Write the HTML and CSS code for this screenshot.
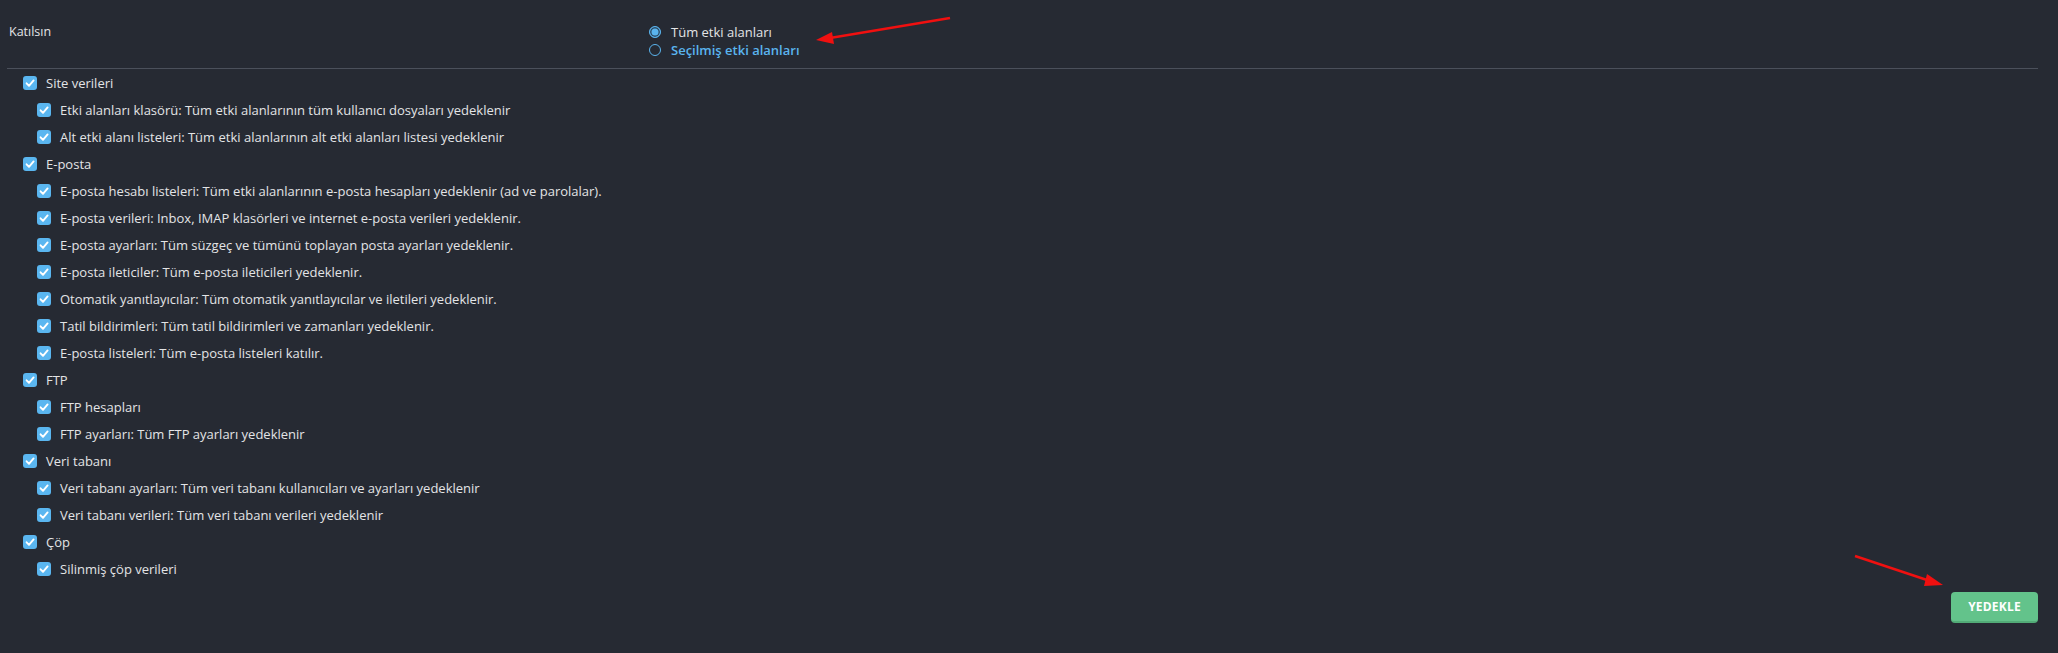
FILE: index.html
```html
<!DOCTYPE html>
<html lang="tr">
<head>
<meta charset="utf-8">
<title>Yedekle</title>
<link rel="stylesheet" href="styles.css">
</head>
<body>
<div class="page">
  <div class="field-row">
    <div class="field-label">Katılsın</div>
    <div class="radio-group">
      <label class="radio"><span class="radio-dot checked"></span><span class="radio-text">Tüm etki alanları</span></label>
      <label class="radio"><span class="radio-dot"></span><span class="radio-text link">Seçilmiş etki alanları</span></label>
    </div>
  </div>
  <ul class="tree">
    <li class="row lvl1"><span class="cb"><svg viewBox="0 0 14 14"><path d="M3.6 7.3 L6 9.8 L10.6 4.4"/></svg></span>Site verileri</li>
    <li class="row lvl2"><span class="cb"><svg viewBox="0 0 14 14"><path d="M3.6 7.3 L6 9.8 L10.6 4.4"/></svg></span>Etki alanları klasörü: Tüm etki alanlarının tüm kullanıcı dosyaları yedeklenir</li>
    <li class="row lvl2"><span class="cb"><svg viewBox="0 0 14 14"><path d="M3.6 7.3 L6 9.8 L10.6 4.4"/></svg></span>Alt etki alanı listeleri: Tüm etki alanlarının alt etki alanları listesi yedeklenir</li>
    <li class="row lvl1"><span class="cb"><svg viewBox="0 0 14 14"><path d="M3.6 7.3 L6 9.8 L10.6 4.4"/></svg></span>E-posta</li>
    <li class="row lvl2"><span class="cb"><svg viewBox="0 0 14 14"><path d="M3.6 7.3 L6 9.8 L10.6 4.4"/></svg></span>E-posta hesabı listeleri: Tüm etki alanlarının e-posta hesapları yedeklenir (ad ve parolalar).</li>
    <li class="row lvl2"><span class="cb"><svg viewBox="0 0 14 14"><path d="M3.6 7.3 L6 9.8 L10.6 4.4"/></svg></span>E-posta verileri: Inbox, IMAP klasörleri ve internet e-posta verileri yedeklenir.</li>
    <li class="row lvl2"><span class="cb"><svg viewBox="0 0 14 14"><path d="M3.6 7.3 L6 9.8 L10.6 4.4"/></svg></span>E-posta ayarları: Tüm süzgeç ve tümünü toplayan posta ayarları yedeklenir.</li>
    <li class="row lvl2"><span class="cb"><svg viewBox="0 0 14 14"><path d="M3.6 7.3 L6 9.8 L10.6 4.4"/></svg></span>E-posta ileticiler: Tüm e-posta ileticileri yedeklenir.</li>
    <li class="row lvl2"><span class="cb"><svg viewBox="0 0 14 14"><path d="M3.6 7.3 L6 9.8 L10.6 4.4"/></svg></span>Otomatik yanıtlayıcılar: Tüm otomatik yanıtlayıcılar ve iletileri yedeklenir.</li>
    <li class="row lvl2"><span class="cb"><svg viewBox="0 0 14 14"><path d="M3.6 7.3 L6 9.8 L10.6 4.4"/></svg></span>Tatil bildirimleri: Tüm tatil bildirimleri ve zamanları yedeklenir.</li>
    <li class="row lvl2"><span class="cb"><svg viewBox="0 0 14 14"><path d="M3.6 7.3 L6 9.8 L10.6 4.4"/></svg></span>E-posta listeleri: Tüm e-posta listeleri katılır.</li>
    <li class="row lvl1"><span class="cb"><svg viewBox="0 0 14 14"><path d="M3.6 7.3 L6 9.8 L10.6 4.4"/></svg></span>FTP</li>
    <li class="row lvl2"><span class="cb"><svg viewBox="0 0 14 14"><path d="M3.6 7.3 L6 9.8 L10.6 4.4"/></svg></span>FTP hesapları</li>
    <li class="row lvl2"><span class="cb"><svg viewBox="0 0 14 14"><path d="M3.6 7.3 L6 9.8 L10.6 4.4"/></svg></span>FTP ayarları: Tüm FTP ayarları yedeklenir</li>
    <li class="row lvl1"><span class="cb"><svg viewBox="0 0 14 14"><path d="M3.6 7.3 L6 9.8 L10.6 4.4"/></svg></span>Veri tabanı</li>
    <li class="row lvl2"><span class="cb"><svg viewBox="0 0 14 14"><path d="M3.6 7.3 L6 9.8 L10.6 4.4"/></svg></span>Veri tabanı ayarları: Tüm veri tabanı kullanıcıları ve ayarları yedeklenir</li>
    <li class="row lvl2"><span class="cb"><svg viewBox="0 0 14 14"><path d="M3.6 7.3 L6 9.8 L10.6 4.4"/></svg></span>Veri tabanı verileri: Tüm veri tabanı verileri yedeklenir</li>
    <li class="row lvl1"><span class="cb"><svg viewBox="0 0 14 14"><path d="M3.6 7.3 L6 9.8 L10.6 4.4"/></svg></span>Çöp</li>
    <li class="row lvl2"><span class="cb"><svg viewBox="0 0 14 14"><path d="M3.6 7.3 L6 9.8 L10.6 4.4"/></svg></span>Silinmiş çöp verileri</li>
  </ul>
  <div class="actions">
    <button class="btn">YEDEKLE</button>
  </div>
</div>
<svg class="annot" width="2058" height="653" viewBox="0 0 2058 653">
  <line x1="950" y1="18" x2="830" y2="38" />
  <polygon points="816,40 832,32 834,44" />
  <line x1="1855" y1="556" x2="1930" y2="581" />
  <polygon points="1943,585 1927,574 1924,586" />
</svg>
</body>
</html>
```

FILE: styles.css
```css
html, body {
  margin: 0;
  padding: 0;
  background: #262a33;
  height: 100%;
}
body {
  font-family: "Open Sans", "Liberation Sans", sans-serif;
  font-size: 13px;
  color: #e3e4e6;
  position: relative;
  overflow: hidden;
}
.page {
  padding: 0 20px 0 7px;
}
.field-row {
  display: flex;
  padding: 23px 0 9px;
  border-bottom: 1px solid #4b505b;
}
.field-label {
  width: 640px;
  padding-left: 2px;
  line-height: 18px;
  font-size: 12.5px;
}
.radio-group {
  display: flex;
  flex-direction: column;
}
.radio {
  display: flex;
  align-items: center;
  height: 18px;
  gap: 10px;
}
.radio-dot {
  width: 10px;
  height: 10px;
  border: 1.5px solid #5ab4ee;
  border-radius: 50%;
  box-sizing: content-box;
  position: relative;
}
.radio-dot.checked {
  background: #5ab4ee;
  box-shadow: inset 0 0 0 1.5px #2c4a63;
}
.radio-text {
  font-size: 13px;
  color: #e3e4e6;
}
.radio-text.link {
  color: #5ab4ee;
  font-weight: 600;
}
.tree {
  list-style: none;
  margin: 0;
  padding: 0;
}
.row {
  display: flex;
  align-items: center;
  height: 27.05px;
  gap: 9px;
}
.lvl1 { padding-left: 16px; }
.lvl2 { padding-left: 30px; }
.cb {
  width: 14px;
  height: 14px;
  border-radius: 3px;
  background: #5ab6f0;
  flex: none;
  display: flex;
}
.cb svg {
  width: 14px;
  height: 14px;
  fill: none;
  stroke: #ffffff;
  stroke-width: 1.9;
  stroke-linecap: round;
  stroke-linejoin: round;
}
.actions {
  display: flex;
  justify-content: flex-end;
  padding-top: 9px;
}
.btn {
  width: 87px;
  height: 31px;
  border: none;
  border-bottom: 2px solid #52ab77;
  border-radius: 4px;
  background: #63c38b;
  color: #ffffff;
  font-family: "Open Sans", "Liberation Sans", sans-serif;
  font-weight: 700;
  font-size: 12px;
  letter-spacing: 0.2px;
  padding: 0;
}
.annot {
  position: absolute;
  left: 0;
  top: 0;
  pointer-events: none;
}
.annot line {
  stroke: #f01010;
  stroke-width: 2.5;
}
.annot polygon {
  fill: #f01010;
}
```
